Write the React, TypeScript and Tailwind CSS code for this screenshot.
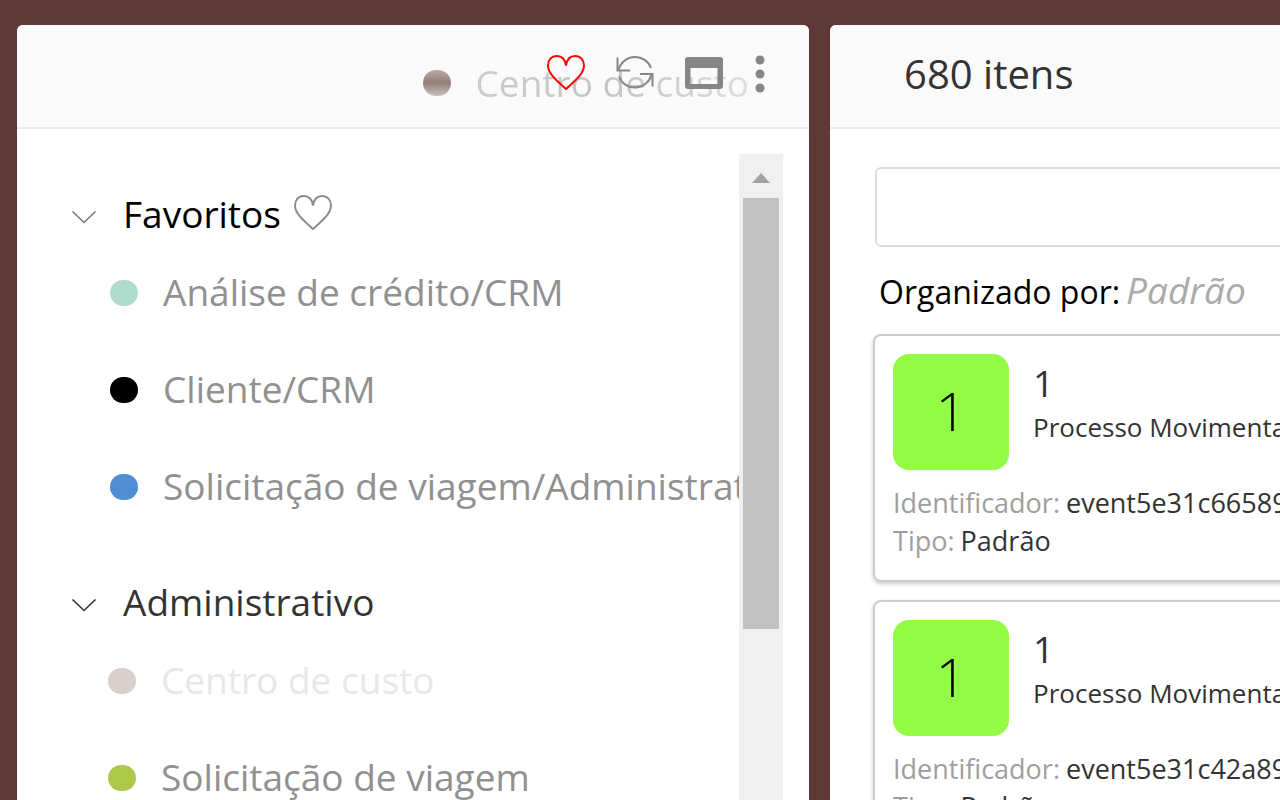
type Item = {
  label: string;
  dot: string;
  faded?: boolean;
};

type Group = {
  name: string;
  favorite?: boolean;
  items: Item[];
};

const GROUPS: Group[] = [
  {
    name: 'Favoritos',
    favorite: true,
    items: [
      { label: 'Análise de crédito/CRM', dot: 'bg-[#b0dccd]' },
      { label: 'Cliente/CRM', dot: 'bg-black' },
      { label: 'Solicitação de viagem/Administrativo', dot: 'bg-[#518dd3]' },
    ],
  },
  {
    name: 'Administrativo',
    items: [
      { label: 'Centro de custo', dot: 'bg-[#d9d0ce]', faded: true },
      { label: 'Solicitação de viagem', dot: 'bg-[#aec84a]' },
    ],
  },
];

const RECORDS = [
  { code: '1', title: '1', subtitle: 'Processo Movimenta', identifier: 'event5e31c66589', type: 'Padrão' },
  { code: '1', title: '1', subtitle: 'Processo Movimenta', identifier: 'event5e31c42a89', type: 'Padrão' },
];

function HeartIcon() {
  return (
    <svg width="40" height="38" viewBox="0 0 40 38" fill="none" stroke="currentColor" strokeWidth="2" aria-hidden="true">
      <path d="M20 12.5C19 6 15.5 3 11 3C5.5 3 2 7 2 12.5C2 20 9 26 20 36C31 26 38 20 38 12.5C38 7 34.5 3 29 3C24.5 3 21 6 20 12.5Z" />
    </svg>
  );
}

function RefreshIcon() {
  return (
    <svg width="40" height="38" viewBox="0 0 40 38" fill="none" stroke="currentColor" strokeWidth="2" aria-hidden="true">
      <path d="M2.5 4.5V17.5H15" />
      <path d="M3.5 17A17 17 0 0 1 36 15" />
      <path d="M37.5 33.5V21H25" />
      <path d="M36.5 21.5A17 17 0 0 1 4 23.5" />
    </svg>
  );
}

function WindowIcon() {
  return (
    <svg width="40" height="38" viewBox="0 0 40 38" fill="currentColor" aria-hidden="true">
      <path fillRule="evenodd" d="M4 4H36A3 3 0 0 1 39 7V33A3 3 0 0 1 36 36H4A3 3 0 0 1 1 33V7A3 3 0 0 1 4 4ZM6.500 15V31H33.500V15Z" />
    </svg>
  );
}

function MoreIcon() {
  return (
    <svg width="10" height="38" viewBox="0 0 10 38" fill="currentColor" aria-hidden="true">
      <circle cx="5" cy="5" r="4.500" />
      <circle cx="5" cy="19" r="4.500" />
      <circle cx="5" cy="33" r="4.500" />
    </svg>
  );
}

function ChevronIcon() {
  return (
    <svg width="26" height="16" viewBox="0 0 26 16" fill="none" stroke="currentColor" strokeWidth="1.600" aria-hidden="true">
      <path d="M1.500 2.500L13 13.500L24.500 2.500" />
    </svg>
  );
}

function GroupSection({ group }: { group: Group }) {
  return (
    <section className="mb-[38px]">
      <h2 className="flex">
        <button
          type="button"
          className={`flex h-[59px] items-center gap-1 whitespace-nowrap text-left ${group.favorite ? 'text-black' : 'text-[#333333]'}`}
        >
          <span className={`mr-[22px] pt-1 ${group.favorite ? 'text-[#777777]' : ''}`}>
            <ChevronIcon />
          </span>
          <span className="pb-0.5">{group.name}</span>
          {group.favorite && (
            <span className="ml-2 pb-1.5 text-[#8c8c8c]">
              <HeartIcon />
            </span>
          )}
        </button>
      </h2>
      <ul className={group.favorite ? 'pl-[39px]' : 'pl-[37px]'}>
        {group.items.map((item) => (
          <li key={item.label}>
            <a
              href="#"
              className={`flex h-[97px] items-center gap-[25px] whitespace-nowrap ${item.faded ? 'text-[#e8e8e8]' : 'text-[#909090]'}`}
            >
              <span className={`h-[26px] w-7 shrink-0 rounded-[13px] ${item.dot}`} />
              <span className="pb-0.5">{item.label}</span>
            </a>
          </li>
        ))}
      </ul>
    </section>
  );
}

function ProcessPanel() {
  return (
    <div className="relative flex w-[calc(62%+9px)] shrink-0 flex-col overflow-hidden rounded-t-md bg-white">
      <header className="flex h-[104px] shrink-0 items-center justify-end border-b-2 border-[#ebebeb] bg-[#fafafa] pr-11 pb-2 text-[#868686]">
        <div className="z-10 flex items-center gap-[29px]">
          <button type="button" aria-label="Favoritar" className="text-[#ff0000]"><HeartIcon /></button>
          <button type="button" aria-label="Atualizar"><RefreshIcon /></button>
          <button type="button" aria-label="Janela"><WindowIcon /></button>
          <button type="button" aria-label="Mais opções" className="ml-0.5 pt-1"><MoreIcon /></button>
        </div>
      </header>

      {/* Row being dragged */}
      <div className="absolute top-8 right-[60px] flex items-center gap-[25px] whitespace-nowrap">
        <span className="h-[26px] w-7 rounded-[13px] bg-linear-to-b from-[#b9aaa5] via-[#947f78] to-[#cbc1be]" />
        <span className="bg-linear-to-r from-[#cccccc] via-[#c4c4c4] to-[#dedede] bg-clip-text text-transparent">
          Centro de custo
        </span>
      </div>

      <div className="mt-[25px] mr-[26px] flex min-h-0 flex-1">
        <nav className="min-w-0 flex-1 overflow-hidden pt-[31px] pl-[54px]">
          {GROUPS.map((group) => (
            <GroupSection key={group.name} group={group} />
          ))}
        </nav>
        <div className="flex w-11 shrink-0 flex-col items-center bg-[#f0f0f0]" aria-hidden="true">
          <div className="flex h-11 shrink-0 items-center pt-1">
            <svg width="18" height="10" viewBox="0 0 18 10" fill="#a3a3a3">
              <path d="M9 0L18 10H0Z" />
            </svg>
          </div>
          <div className="h-[431px] w-9 shrink-0 bg-[#c1c1c1]" />
        </div>
      </div>
    </div>
  );
}

function RecordCard({ record }: { record: (typeof RECORDS)[number] }) {
  return (
    <article className="rounded-lg border-2 border-[#cccccc] bg-white px-[18px] pt-[18px] pb-5 text-[27px] leading-[38px] whitespace-nowrap text-[#333333] shadow-[0_2px_4px_rgba(0,0,0,0.2)]">
      <div className="flex gap-6">
        <div className="flex size-[116px] shrink-0 items-center justify-center rounded-2xl bg-[#93fb46] pb-1 text-[54px] font-light text-black">
          {record.code}
        </div>
        <div className="pt-[7px]">
          <h3 className="text-[37px] leading-[44px]">{record.title}</h3>
          <p className="text-[26px] leading-[44px]">{record.subtitle}</p>
        </div>
      </div>
      <dl className="mt-[14px]">
        <div className="flex gap-1.5">
          <dt className="text-[#9e9e9e]">Identificador:</dt>
          <dd>{record.identifier}</dd>
        </div>
        <div className="flex gap-1.5">
          <dt className="text-[#9e9e9e]">Tipo:</dt>
          <dd>{record.type}</dd>
        </div>
      </dl>
    </article>
  );
}

function RecordsPanel() {
  return (
    <main className="min-w-[720px] flex-1 rounded-t-md bg-white">
      <header className="flex h-[104px] items-center rounded-t-md border-b-2 border-[#ebebeb] bg-[#fafafa] px-[74px] pb-1">
        <h1 className="text-[40px] text-[#333333]">680 itens</h1>
      </header>
      <div className="px-[43px] pt-[38px]">
        <input
          type="text"
          aria-label="Buscar"
          className="mx-[2px] block h-20 w-full rounded-md border-2 border-[#dddddd] bg-white px-4 outline-none"
        />
        <p className="flex h-[87px] items-baseline gap-1.5 px-[6px] pt-[17px] whitespace-nowrap text-black">
          <span className="text-[32px]">Organizado por:</span>
          <em className="text-[#aaaaaa]">Padrão</em>
        </p>
        <div className="flex flex-col gap-[18px]">
          {RECORDS.map((record) => (
            <RecordCard key={record.identifier} record={record} />
          ))}
        </div>
      </div>
    </main>
  );
}

export default function App() {
  return (
    <div className="flex h-screen gap-[21px] overflow-hidden bg-[#5d3938] pt-[25px] pl-[17px] font-['Open_Sans','Noto_Sans',sans-serif] text-[37px] leading-[52px]">
      <ProcessPanel />
      <RecordsPanel />
    </div>
  );
}
